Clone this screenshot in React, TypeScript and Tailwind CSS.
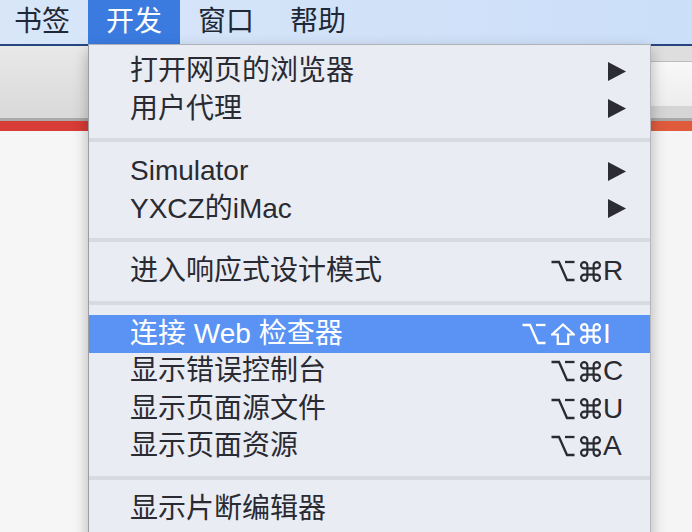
import React from "react";

type Item =
  | { kind: "item"; label: string; arrow?: boolean; mods?: string[]; key?: string; active?: boolean }
  | { kind: "sep" };

const items: Item[] = [
  { kind: "item", label: "打开网页的浏览器", arrow: true },
  { kind: "item", label: "用户代理", arrow: true },
  { kind: "sep" },
  { kind: "item", label: "Simulator", arrow: true },
  { kind: "item", label: "YXCZ的iMac", arrow: true },
  { kind: "sep" },
  { kind: "item", label: "进入响应式设计模式", mods: ["opt", "cmd"], key: "R" },
  { kind: "sep" },
  { kind: "item", label: "连接 Web 检查器", mods: ["opt", "shift", "cmd"], key: "I", active: true },
  { kind: "item", label: "显示错误控制台", mods: ["opt", "cmd"], key: "C" },
  { kind: "item", label: "显示页面源文件", mods: ["opt", "cmd"], key: "U" },
  { kind: "item", label: "显示页面资源", mods: ["opt", "cmd"], key: "A" },
  { kind: "sep" },
  { kind: "item", label: "显示片断编辑器" },
];

function Arrow() {
  return (
    <svg width="18" height="19" viewBox="0 0 18 19" className="shrink-0">
      <polygon points="0,0 18,9.5 0,19" fill="#2c2c34" />
    </svg>
  );
}

function Mod({ name }: { name: string }) {
  if (name === "opt")
    return (
      <svg width="24" height="22" viewBox="0 0 24 22" fill="none" stroke="currentColor" strokeWidth="2.3">
        <path d="M0.5 2H8L16 20H23.5" />
        <path d="M14 2H23.5" />
      </svg>
    );
  if (name === "shift")
    return (
      <svg width="24" height="22" viewBox="0 0 24 22" fill="none" stroke="currentColor" strokeWidth="2.2" strokeLinejoin="miter">
        <path d="M12 1.5L22.8 11.5H17.2V20.8H6.8V11.5H1.2Z" />
      </svg>
    );
  return (
    <svg width="21" height="21" viewBox="2 2 20 20" fill="none" stroke="currentColor" strokeWidth="2.05">
      <path d="M15 6v12a3 3 0 1 0 3-3H6a3 3 0 1 0 3 3V6a3 3 0 1 0-3 3h12a3 3 0 1 0-3-3" />
    </svg>
  );
}

export default function App() {
  return (
    <div className="relative w-[692px] h-[532px] overflow-hidden font-['Liberation_Sans','Noto_Sans_CJK_SC',sans-serif] text-[28px]">
      {/* menu bar */}
      <div className="h-[44px] flex items-stretch bg-gradient-to-r from-[#d8e6f8] via-[#d2e2f8] to-[#cbdff9] text-[#1e2836]">
        <div className="ml-[-4px] px-[18px] flex items-center">书签</div>
        <div className="px-[18px] flex items-center bg-[#3b7be0] text-white">开发</div>
        <div className="px-[18px] flex items-center">窗口</div>
        <div className="px-[18px] flex items-center">帮助</div>
      </div>
      <div className="h-[2px] bg-[#27467f]" />
      {/* window background */}
      <div className="flex h-[486px]">
        <div className="w-[88px] flex flex-col">
          <div className="h-[72px] bg-gradient-to-b from-[#e9e9e9] to-[#d9d9d9]" />
          <div className="h-[3px] bg-[#a9a9a9]" />
          <div className="h-[10px] bg-[#d83c37]" />
          <div className="flex-1 bg-[#f6f6f6]" />
        </div>
        <div className="flex-1 flex flex-col">
          <div className="h-[15px] bg-[#dedede]" />
          <div className="h-[1px] bg-[#bdbdbd]" />
          <div className="h-[44px] bg-gradient-to-b from-[#f8f8f8] to-[#ededed]" />
          <div className="h-[12px] bg-[#d5d5d5]" />
          <div className="h-[3px] bg-[#a9a9a9]" />
          <div className="h-[10px] bg-[#e05b3c]" />
          <div className="flex-1 bg-[#f5f5f5]" />
        </div>
      </div>

      {/* dropdown menu */}
      <div className="absolute left-[88px] top-[44px] w-[563px] h-[500px] bg-[#e9ecf3] border-l border-r border-t border-l-[#9a9ca2] border-r-[#b4b6bb] border-t-[#aeb1b8] shadow-[0_6px_14px_rgba(0,0,0,0.28)] pt-[7.5px] text-[#2a2a32]">
        {items.map((it, i) =>
          it.kind === "sep" ? (
            <div key={i} className="h-[25px] flex items-center">
              <div className="w-full h-[4px] bg-[#d8dae1]" />
            </div>
          ) : (
            <div
              key={i}
              className={`h-[37.5px] flex items-center justify-between pl-[41px] pr-[24px] ${
                it.active ? "bg-[#5a93f3] text-white" : ""
              }`}
            >
              <span className="whitespace-pre leading-none">{it.label}</span>
              {it.arrow ? <Arrow /> : null}
              {it.key ? (
                <div className="flex items-center leading-none">
                  <div className="flex items-center gap-[5px] mr-[2px]">
                    {it.mods?.map((m) => (
                      <Mod key={m} name={m} />
                    ))}
                  </div>
                  <span className="w-[23px]">{it.key}</span>
                </div>
              ) : null}
            </div>
          )
        )}
      </div>
    </div>
  );
}
